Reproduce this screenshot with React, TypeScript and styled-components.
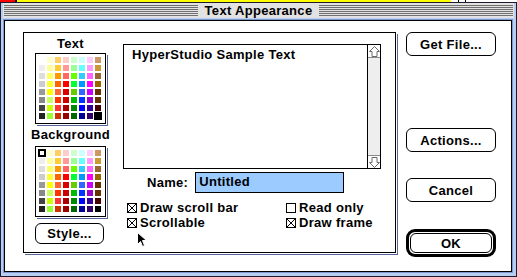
import React from 'react';
import styled, { createGlobalStyle } from 'styled-components';

const GlobalStyle = createGlobalStyle`
  html, body {
    margin: 0;
    padding: 0;
    background: #fff;
  }
  body {
    font-family: 'Liberation Sans', Arial, sans-serif;
  }
  * {
    box-sizing: border-box;
  }
`;

const PALETTE = [
  '#ffffff', '#ffffcc', '#ffcc66', '#ffcccc', '#ccffcc', '#ccffff', '#ffccff', '#cc9966',
  '#eeeeee', '#ffff99', '#ffcc33', '#ff9999', '#99ff99', '#66ffff', '#ff99ff', '#cc9933',
  '#dddddd', '#ffff66', '#ff9900', '#ff6666', '#66ff00', '#33ccff', '#ff66ff', '#996633',
  '#cccccc', '#ffff33', '#ff6600', '#ff0000', '#00ff33', '#0099ff', '#ff00ff', '#996600',
  '#999999', '#ffff00', '#ff6633', '#dd0000', '#66cc00', '#3366ff', '#cc00ff', '#663300',
  '#888888', '#ccff66', '#ff3300', '#cc0000', '#00bb00', '#0033ff', '#9900cc', '#663300',
  '#444444', '#ccff00', '#ff3333', '#aa0000', '#008800', '#0000ff', '#330099', '#440000',
  '#222222', '#99ff33', '#cc3300', '#990000', '#006600', '#000099', '#330066', '#000000',
];

const Screen = styled.div`
  width: 517px;
  height: 277px;
  overflow: hidden;
  display: flex;
  flex-direction: column;
`;

const DesktopStrip = styled.div`
  height: 2px;
  display: flex;
  background: #fff;
`;

const StripSegment = styled.div<{ $color: string; $width: number }>`
  width: ${({ $width }) => $width}px;
  background: ${({ $color }) => $color};
`;

const Window = styled.div`
  height: 275px;
  border: 1px solid #1c1c2c;
  background: #b7cdf2;
  padding: 0 4px 4px 3px;
  display: flex;
  flex-direction: column;
`;

const TitleBar = styled.div`
  height: 15px;
  margin: 0 -2px 2px -1px;
  padding: 0 1px;
  background: #e2e2e2;
  display: flex;
  align-items: center;
`;

const TitleLines = styled.div`
  flex: 1;
  height: 11px;
  background: repeating-linear-gradient(to bottom, #707070 0 1px, #e2e2e2 1px 2px);
`;

const Title = styled.div`
  padding: 0 7px;
  font-size: 13px;
  font-weight: 700;
  line-height: 15px;
  letter-spacing: 0.3px;
  color: #000;
`;

const Content = styled.div`
  flex: 1;
  border: 1px solid #000;
  background: #fff;
  box-shadow: 0 0 0 1px #7d97cf;
  display: flex;
  padding: 11px 0 0 18px;
`;

const Panel = styled.div`
  position: relative;
  width: 373px;
  height: 221px;
  border: 1px solid #000;
  box-shadow: 1px 1px 0 #fff, 2px 2px 0 #56669a;
  display: flex;
  padding: 4px 0 0 11px;
`;

const PaletteColumn = styled.div`
  width: 71px;
  display: flex;
  flex-direction: column;
  align-items: center;
`;

const Label = styled.div<{ $gap: number }>`
  margin-top: ${({ $gap }) => $gap}px;
  font-size: 13px;
  font-weight: 700;
  line-height: 14px;
  letter-spacing: 0.3px;
  white-space: nowrap;
  color: #000;
`;

const Palette = styled.div<{ $gap: number }>`
  margin-top: ${({ $gap }) => $gap}px;
  width: 71px;
  height: 71px;
  border: 1px solid #000;
  box-shadow: 1px 1px 0 #fff, 2px 2px 0 #56669a;
  padding: 3px 4px 4px 3px;
  display: grid;
  grid-template-columns: repeat(8, 6px);
  grid-auto-rows: 6px;
  gap: 2px;
`;

const Swatch = styled.div<{ $color: string; $selected?: boolean }>`
  background: ${({ $color }) => $color};
  ${({ $selected }) =>
    $selected ? 'outline: 1px solid #000; box-shadow: inset 0 0 0 1px #000;' : ''}
`;

const Button = styled.div<{ $height?: number }>`
  height: ${({ $height }) => $height ?? 24}px;
  border: 1px solid #000;
  border-radius: 6px;
  background: #fff;
  display: flex;
  align-items: center;
  justify-content: center;
  font-size: 13px;
  font-weight: 700;
  letter-spacing: 0.3px;
  color: #000;
`;

const StyleButton = styled(Button)`
  width: 69px;
  margin-top: 6px;
  align-self: flex-start;
`;

const Editor = styled.div`
  margin: 7px 0 0 17px;
  display: flex;
  flex-direction: column;
`;

const TextBox = styled.div`
  width: 258px;
  height: 125px;
  border: 1px solid #000;
  display: flex;
`;

const SampleText = styled.div`
  flex: 1;
  padding: 3px 8px;
  font-size: 13px;
  font-weight: 700;
  line-height: 14px;
  letter-spacing: 0.3px;
  color: #000;
`;

const ScrollBar = styled.div`
  width: 13px;
  border-left: 1px solid #000;
  background: #eeeeee;
  display: flex;
  flex-direction: column;
  justify-content: space-between;
`;

const ScrollArrow = styled.div<{ $down?: boolean }>`
  height: 13px;
  background: #fff;
  display: flex;
  align-items: center;
  justify-content: center;
  ${({ $down }) => ($down ? 'border-top: 1px solid #8a8a8a;' : 'border-bottom: 1px solid #8a8a8a;')}

  svg {
    transform: ${({ $down }) => ($down ? 'rotate(180deg)' : 'none')};
  }
`;

const NameRow = styled.div`
  margin-top: 3px;
  padding-left: 24px;
  display: flex;
  align-items: center;
  gap: 7px;
  font-size: 13px;
  font-weight: 700;
  letter-spacing: 0.3px;
`;

const NameField = styled.div`
  width: 149px;
  height: 21px;
  border: 1px solid #000;
  background: #9ccbff;
  padding-left: 3px;
  line-height: 17px;
  color: #000;
`;

const Options = styled.div`
  margin-top: 7px;
  padding-left: 4px;
  display: grid;
  grid-template-columns: 159px auto;
  grid-auto-rows: 15px;
`;

const Option = styled.div`
  display: flex;
  align-items: center;
  gap: 3px;
  font-size: 13px;
  font-weight: 700;
  letter-spacing: 0.3px;
  white-space: nowrap;
  color: #000;
`;

const Cursor = styled.svg`
  position: absolute;
  left: 113px;
  top: 199px;
`;

const ButtonColumn = styled.div`
  width: 90px;
  margin-left: 10px;
  display: flex;
  flex-direction: column;
`;

const Spaced = styled.div<{ $gap: number }>`
  margin-top: ${({ $gap }) => $gap}px;
`;

const DefaultRing = styled.div`
  height: 28px;
  border: 3px solid #000;
  border-radius: 9px;
  padding: 1px;
`;

const Arrow = () => (
  <svg width="11" height="11" viewBox="0 0 11 11">
    <path d="M5.5 0.5 L10.5 5.5 H8 V10.5 H3 V5.5 H0.5 Z" fill="#fff" stroke="#6a6a6a" strokeWidth="1" />
  </svg>
);

const CheckBox = ({ checked }: { checked: boolean }) => (
  <svg width="10" height="10" viewBox="0 0 10 10">
    <rect x="0.5" y="0.5" width="9" height="9" fill="#fff" stroke="#000" />
    {checked && <path d="M1 1 L9 9 M9 1 L1 9" stroke="#000" strokeWidth="1" />}
  </svg>
);

const OPTIONS = [
  { label: 'Draw scroll bar', checked: true },
  { label: 'Read only', checked: false },
  { label: 'Scrollable', checked: true },
  { label: 'Draw frame', checked: true },
];

const ColorPalette = ({ gap, selected }: { gap: number; selected: number }) => (
  <Palette $gap={gap}>
    {PALETTE.map((color, i) => (
      <Swatch key={i} $color={color} $selected={i === selected} />
    ))}
  </Palette>
);

const App: React.FC = () => {
  return (
    <Screen>
      <GlobalStyle />
      <DesktopStrip>
        <StripSegment $color="#ff0000" $width={15} />
        <StripSegment $color="#000" $width={2} />
        <StripSegment $color="#ffff00" $width={434} />
        <StripSegment $color="#fff" $width={7} />
        <StripSegment $color="#000" $width={1} />
        <StripSegment $color="#fff" $width={6} />
        <StripSegment $color="#000" $width={1} />
      </DesktopStrip>
      <Window>
        <TitleBar>
          <TitleLines />
          <Title>Text Appearance</Title>
          <TitleLines />
        </TitleBar>
        <Content>
          <Panel>
            <PaletteColumn>
              <Label $gap={0}>Text</Label>
              <ColorPalette gap={2} selected={63} />
              <Label $gap={4}>Background</Label>
              <ColorPalette gap={4} selected={0} />
              <StyleButton $height={21}>Style...</StyleButton>
            </PaletteColumn>
            <Editor>
              <TextBox>
                <SampleText>HyperStudio Sample Text</SampleText>
                <ScrollBar>
                  <ScrollArrow>
                    <Arrow />
                  </ScrollArrow>
                  <ScrollArrow $down>
                    <Arrow />
                  </ScrollArrow>
                </ScrollBar>
              </TextBox>
              <NameRow>
                <span>Name:</span>
                <NameField>Untitled</NameField>
              </NameRow>
              <Options>
                {OPTIONS.map((o) => (
                  <Option key={o.label}>
                    <CheckBox checked={o.checked} />
                    {o.label}
                  </Option>
                ))}
              </Options>
            </Editor>
            <Cursor width="11" height="16" viewBox="0 0 11 16">
              <path d="M0.5 0.5 L0.5 12.5 L3.5 9.5 L5.5 14.5 L7.5 13.5 L5.5 8.5 L9.5 8.5 Z" fill="#000" stroke="#fff" strokeWidth="1" />
            </Cursor>
          </Panel>
          <ButtonColumn>
            <Button>Get File...</Button>
            <Spaced $gap={72}>
              <Button>Actions...</Button>
            </Spaced>
            <Spaced $gap={26}>
              <Button>Cancel</Button>
            </Spaced>
            <Spaced $gap={27}>
              <DefaultRing>
                <Button $height={20}>OK</Button>
              </DefaultRing>
            </Spaced>
          </ButtonColumn>
        </Content>
      </Window>
    </Screen>
  );
};

export default App;
